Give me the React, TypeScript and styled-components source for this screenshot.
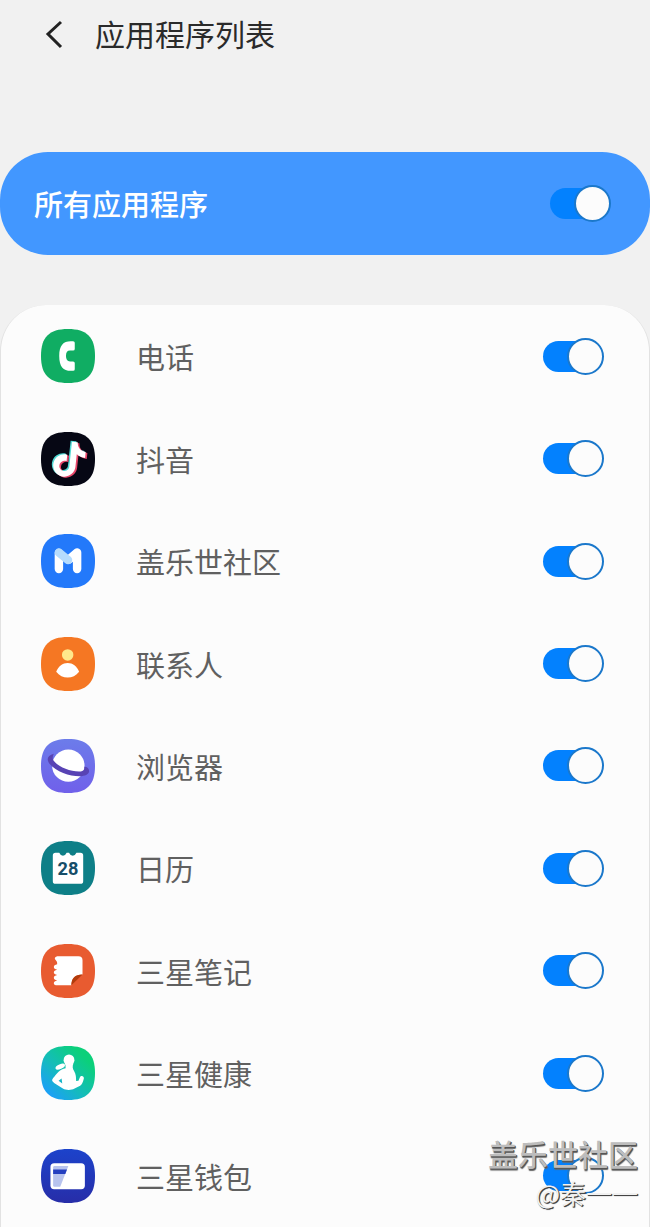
import React, { useState } from 'react';
import styled, { createGlobalStyle } from 'styled-components';

const GlobalStyle = createGlobalStyle`
  *, *::before, *::after { box-sizing: border-box; }
  body {
    margin: 0;
    background: #f1f1f1;
    font-family: "Noto Sans CJK SC", "Noto Sans", sans-serif;
  }
`;

const Page = styled.div`
  position: relative;
  display: flex;
  flex-direction: column;
  min-height: 100vh;
`;

const Header = styled.header`
  display: flex;
  align-items: center;
  gap: 19px;
  height: 68px;
  margin-bottom: 84px;
  padding-left: 32px;
`;

const BackButton = styled.button`
  display: flex;
  align-items: center;
  justify-content: center;
  width: 44px;
  height: 44px;
  padding: 0;
  border: 0;
  background: none;
`;

const Title = styled.h1`
  margin: 0;
  padding-bottom: 2px;
  font-size: 30px;
  font-weight: 400;
  line-height: 44px;
  color: #2a2a2a;
`;

const AllApps = styled.section`
  display: flex;
  align-items: center;
  justify-content: space-between;
  height: 103px;
  margin-bottom: 50px;
  padding: 0 39px 0 34px;
  border-radius: 48px;
  background: #4297ff;
`;

const AllAppsLabel = styled.label`
  padding-bottom: 2px;
  font-size: 29px;
  font-weight: 500;
  line-height: 42px;
  color: #fff;
`;

const AppList = styled.ul`
  display: grid;
  flex: 1;
  grid-auto-rows: minmax(102px, 1fr);
  margin: 0;
  padding: 0;
  list-style: none;
  border: solid #e2e2e2;
  border-width: 0 1px;
  border-radius: 46px 46px 0 0;
  background: #fcfcfc;
`;

const AppRow = styled.li`
  display: flex;
  align-items: center;
  padding: 0 45px 0 40px;
`;

const AppIcon = styled.svg`
  flex: none;
  width: 54px;
  height: 54px;
`;

const AppLabel = styled.label`
  flex: 1;
  margin-left: 41px;
  font-size: 29px;
  line-height: 42px;
  color: #606060;
`;

const Switch = styled.input`
  display: grid;
  flex: none;
  align-items: center;
  width: 61px;
  height: 37px;
  margin: 0;
  appearance: none;

  &::before, &::after {
    content: "";
    grid-area: 1 / 1;
  }
  &::before {
    width: 54px;
    height: 31px;
    border-radius: 16px;
    background: #b5b5b5;
  }
  &::after {
    width: 37px;
    height: 37px;
    border: 2px solid #8d8d8d;
    border-radius: 50%;
    background: #fcfcfc;
  }
  &:checked::before { background: #0381fe; }
  &:checked::after {
    justify-self: end;
    border-color: #1b78cb;
  }
`;

const Watermark = styled.div`
  position: absolute;
  right: 12px;
  bottom: 16px;
  display: flex;
  flex-direction: column;
  align-items: flex-end;
  gap: 2px;
  pointer-events: none;
`;

const Community = styled.span`
  font-size: 30px;
  font-weight: 500;
  line-height: 40px;
  color: #bdbdbd;
  text-shadow: 1px 1px 0 #555, 1px 2px 1px #666;
`;

const Author = styled.span`
  font-size: 26px;
  line-height: 36px;
  color: #f2f2f2;
  text-shadow: 1px 1px 0 #444, 1px 1px 1px #444;
`;

const TILE = 'M80 0C136 0 160 24 160 80S136 160 80 160 0 136 0 80 24 0 80 0Z';

const NOTE =
  'M12.525.02c1.31-.02 2.61-.01 3.91-.02.08 1.53.63 3.09 1.75 4.17 1.12 1.11 2.7 1.62 4.24 1.79v4.03c-1.44-.05-2.89-.35-4.2-.97-.57-.26-1.1-.59-1.62-.93-.01 2.92.01 5.84-.02 8.75-.08 1.4-.54 2.79-1.35 3.94-1.31 1.92-3.58 3.17-5.91 3.21-1.43.08-2.86-.31-4.08-1.03-2.02-1.19-3.44-3.37-3.65-5.71-.02-.5-.03-1-.01-1.49.18-1.9 1.12-3.72 2.58-4.96 1.66-1.44 3.98-2.13 6.15-1.72.02 1.48-.04 2.96-.04 4.44-.99-.32-2.15-.23-3.02.37-.63.41-1.11 1.04-1.36 1.75-.21.51-.15 1.07-.14 1.61.24 1.64 1.82 3.02 3.5 2.87 1.12-.01 2.19-.66 2.77-1.61.19-.33.4-.67.41-1.06.1-1.79.06-3.57.07-5.36.01-4.03-.01-8.05.02-12.07z';

type App = { id: string; name: string; tile: string; art: React.ReactNode };

const apps: App[] = [
  {
    id: 'phone',
    name: '电话',
    tile: '#10ad63',
    art: (
      <path
        fill="#fff"
        d="M95 36q5 0 5 5v18q0 5-5 5H86Q74 64 74 80T86 96h9q5 0 5 5v18q0 5-5 5H88C66 124 54 112 54 80S66 36 88 36Z"
      />
    ),
  },
  {
    id: 'douyin',
    name: '抖音',
    tile: '#060714',
    art: (
      <>
        <path fill="#4fd8d3" d={NOTE} transform="translate(33 20) rotate(6) scale(4.4)" />
        <path fill="#e8476a" d={NOTE} transform="translate(42 26) rotate(6) scale(4.4)" />
        <path fill="#fff" d={NOTE} transform="translate(37 23) rotate(6) scale(4.4)" />
      </>
    ),
  },
  {
    id: 'members',
    name: '盖乐世社区',
    tile: '#2379fa',
    art: (
      <g fill="none" strokeWidth="25" strokeLinecap="round" strokeLinejoin="round">
        <path stroke="#fff" d="M53 56V104" />
        <path stroke="#fff" d="M82 76L107 55V104" />
        <path stroke="#b5dcfd" d="M53 55L80 77" />
      </g>
    ),
  },
  {
    id: 'contacts',
    name: '联系人',
    tile: '#f57723',
    art: (
      <>
        <circle cx="79" cy="53" r="17" fill="#ffe88c" />
        <path fill="#fff" d="M45 103C52 86 64 77 79 77S106 86 113 103C104 115 92 120 79 120S54 115 45 103Z" />
      </>
    ),
  },
  {
    id: 'browser',
    name: '浏览器',
    tile: 'url(#browserTile)',
    art: (
      <>
        <circle cx="81" cy="79" r="48" fill="#fff" />
        <path
          fill="#5843b4"
          d="M38 44C20 48 15 60 25 73C46 98 90 112 120 110C142 108 147 96 139 86Q135 82 128 82C130 91 126 95 118 96C90 98 52 84 37 64Q32 55 38 44Z"
        />
      </>
    ),
  },
  {
    id: 'calendar',
    name: '日历',
    tile: '#0e7f87',
    art: (
      <>
        <path
          fill="#fff"
          d="M43 35H54Q58 44 65 44T76 35H83Q87 44 94 44T105 35H117Q125 35 125 43V119Q125 127 117 127H43Q35 127 35 119V43Q35 35 43 35Z"
        />
        <text x="80" y="101" textAnchor="middle" fontFamily="Roboto" fontWeight="700" fontSize="54" fill="#174e69">
          28
        </text>
      </>
    ),
  },
  {
    id: 'notes',
    name: '三星笔记',
    tile: '#e85b30',
    art: (
      <>
        <path
          fill="#fff"
          d="M48 36H111Q123 36 123 48V90Q90 90 90 122H48Q38 122 38 116T48 108Q38 106 38 100T48 92Q38 90 38 84T48 76Q38 74 38 68T48 60Q49 52 44 48Q36 40 48 36Z"
        />
        <path fill="#b23c0c" d="M90 122Q90 90 123 90Z" />
      </>
    ),
  },
  {
    id: 'health',
    name: '三星健康',
    tile: 'url(#healthTile)',
    art: (
      <g fill="#fff">
        <ellipse cx="83" cy="42" rx="16" ry="17" />
        <ellipse cx="57" cy="61" rx="15" ry="7" transform="rotate(-24 57 61)" />
        <path
          fillRule="evenodd"
          d="M72 48L96 52Q91 64 98 74C104 84 104 94 104 104L111 103L115 93C118 86 128 88 127 96C124 108 121 114 116 118L98 127C92 131 72 131 66 127L40 110C32 105 31 101 36 95C47 82 56 68 73 66ZM52 103L61 96L63 111Z"
        />
      </g>
    ),
  },
  {
    id: 'wallet',
    name: '三星钱包',
    tile: 'url(#walletTile)',
    art: (
      <>
        <rect x="28" y="42" width="102" height="77" rx="11" fill="#fff" />
        <path fill="#b7c3ee" d="M40 50H81L57 112H40Q36 112 36 108V54Q36 50 40 50Z" />
        <path fill="#243fc0" d="M36 61H77L72 74H36Z" />
      </>
    ),
  },
];

const gradients = (id: string) => {
  if (id === 'browser')
    return (
      <linearGradient id="browserTile" x1="0" y1="0" x2="0" y2="1">
        <stop offset="0" stopColor="#6c7cea" />
        <stop offset="1" stopColor="#7060ea" />
      </linearGradient>
    );
  if (id === 'health')
    return (
      <linearGradient id="healthTile" x1="0.1" y1="0.9" x2="0.8" y2="0.2">
        <stop offset="0" stopColor="#1c9efb" />
        <stop offset="0.5" stopColor="#14bdb8" />
        <stop offset="1" stopColor="#0bd07a" />
      </linearGradient>
    );
  if (id === 'wallet')
    return (
      <linearGradient id="walletTile" x1="0" y1="0" x2="0" y2="1">
        <stop offset="0" stopColor="#1c43cb" />
        <stop offset="1" stopColor="#272da8" />
      </linearGradient>
    );
  return null;
};

export default function App() {
  const [enabled, setEnabled] = useState<Record<string, boolean>>(
    Object.fromEntries(apps.map((app) => [app.id, true])),
  );
  const allOn = apps.every((app) => enabled[app.id]);

  return (
    <>
      <GlobalStyle />
      <Page>
        <Header>
          <BackButton type="button" aria-label="返回">
            <svg width="44" height="44" viewBox="0 0 44 44" fill="none" stroke="#222" strokeWidth="3">
              <path d="M29 10L16 22L29 35" />
            </svg>
          </BackButton>
          <Title>应用程序列表</Title>
        </Header>
        <AllApps>
          <AllAppsLabel htmlFor="all">所有应用程序</AllAppsLabel>
          <Switch
            id="all"
            type="checkbox"
            checked={allOn}
            onChange={(e) => setEnabled(Object.fromEntries(apps.map((app) => [app.id, e.target.checked])))}
          />
        </AllApps>
        <AppList>
          {apps.map((app) => (
            <AppRow key={app.id}>
              <AppIcon viewBox="0 0 160 160" aria-hidden="true">
                <defs>{gradients(app.id)}</defs>
                <path d={TILE} fill={app.tile} />
                {app.art}
              </AppIcon>
              <AppLabel htmlFor={app.id}>{app.name}</AppLabel>
              <Switch
                id={app.id}
                type="checkbox"
                checked={enabled[app.id]}
                onChange={(e) => setEnabled({ ...enabled, [app.id]: e.target.checked })}
              />
            </AppRow>
          ))}
        </AppList>
        <Watermark>
          <Community>盖乐世社区</Community>
          <Author>@秦一一</Author>
        </Watermark>
      </Page>
    </>
  );
}
